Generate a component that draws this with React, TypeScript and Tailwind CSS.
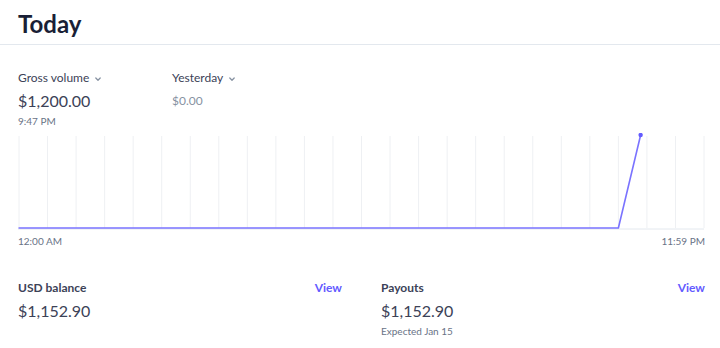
import React from 'react';

const W = 687;
const H = 97;
const hours = Array.from({ length: 25 }, (_, i) => i);
const step = (W - 2) / 24;

const Chevron: React.FC = () => (
  <svg width="8" height="8" viewBox="0 0 8 8" className="ml-[5px] mt-[1px]">
    <path d="M1.8 3 L4 5.2 L6.2 3" fill="none" stroke="#8792a2" strokeWidth="1.3" strokeLinecap="round" strokeLinejoin="round" />
  </svg>
);

const Chart: React.FC = () => {
  const base = 95;
  const riseX = 1 + 21 * step;
  const peakX = 1 + 21.78 * step;
  return (
    <svg width={W} height={H} viewBox={`0 0 ${W} ${H}`} className="block mt-[5px]">
      {hours.map((h) => (
        <line key={h} x1={1 + h * step} y1={3} x2={1 + h * step} y2={base} stroke="#eef0f3" strokeWidth="1" />
      ))}
      <line x1={0} y1={base + 1} x2={W - 1} y2={base + 1} stroke="#e3e8ee" strokeWidth="1" />
      <polyline
        points={`0.5,${base} ${riseX},${base} ${peakX},2`}
        fill="none"
        stroke="#7a73ff"
        strokeWidth="1.6"
        strokeLinejoin="round"
      />
      <circle cx={peakX} cy={2} r={2.2} fill="#635bff" />
    </svg>
  );
};

interface Stat {
  title: string;
  amount: string;
  note?: string;
}

const stats: Stat[] = [
  { title: 'USD balance', amount: '$1,152.90' },
  { title: 'Payouts', amount: '$1,152.90', note: 'Expected Jan 15' }
];

export default function App() {
  return (
    <div className="w-[720px] h-[348px] bg-white overflow-hidden [font-family:'Lato','Noto_Sans',sans-serif] text-[#3c4257]">
      {/* Header */}
      <div className="pl-[18px] pt-[8px] pb-[4px] border-b border-[#e3e8ee]">
        <h1 className="text-[24px] leading-[32px] font-bold text-[#1a1f36]">Today</h1>
      </div>

      <div className="pl-[18px] w-[705px]">
        {/* Summary */}
        <div className="flex mt-[24px]">
          <div className="w-[154px]">
            <div className="flex items-center text-[12px] leading-[18px] text-[#3c4257]">
              Gross volume
              <Chevron />
            </div>
            <div className="mt-[2px] text-[16px] leading-[24px] text-[#3c4257]">$1,200.00</div>
            <div className="mt-[1px] text-[10px] leading-[14px] text-[#697386]">9:47 PM</div>
          </div>
          <div>
            <div className="flex items-center text-[12px] leading-[18px] text-[#3c4257]">
              Yesterday
              <Chevron />
            </div>
            <div className="mt-[2px] text-[12px] leading-[24px] text-[#8792a2]">$0.00</div>
          </div>
        </div>

        <Chart />

        <div className="flex justify-between mt-[4px] text-[10px] leading-[14px] text-[#697386]">
          <span>12:00 AM</span>
          <span>11:59 PM</span>
        </div>

        {/* Balances */}
        <div className="grid grid-cols-2 gap-[39px] mt-[31px]">
          {stats.map((s) => (
            <div key={s.title}>
              <div className="flex justify-between text-[12px] leading-[18px]">
                <span className="font-bold text-[#3c4257]">{s.title}</span>
                <span className="font-bold text-[#635bff]">View</span>
              </div>
              <div className="mt-[2px] text-[16px] leading-[24px] text-[#3c4257]">{s.amount}</div>
              {s.note && <div className="mt-[1px] text-[10px] leading-[14px] text-[#697386]">{s.note}</div>}
            </div>
          ))}
        </div>
      </div>
    </div>
  );
}
